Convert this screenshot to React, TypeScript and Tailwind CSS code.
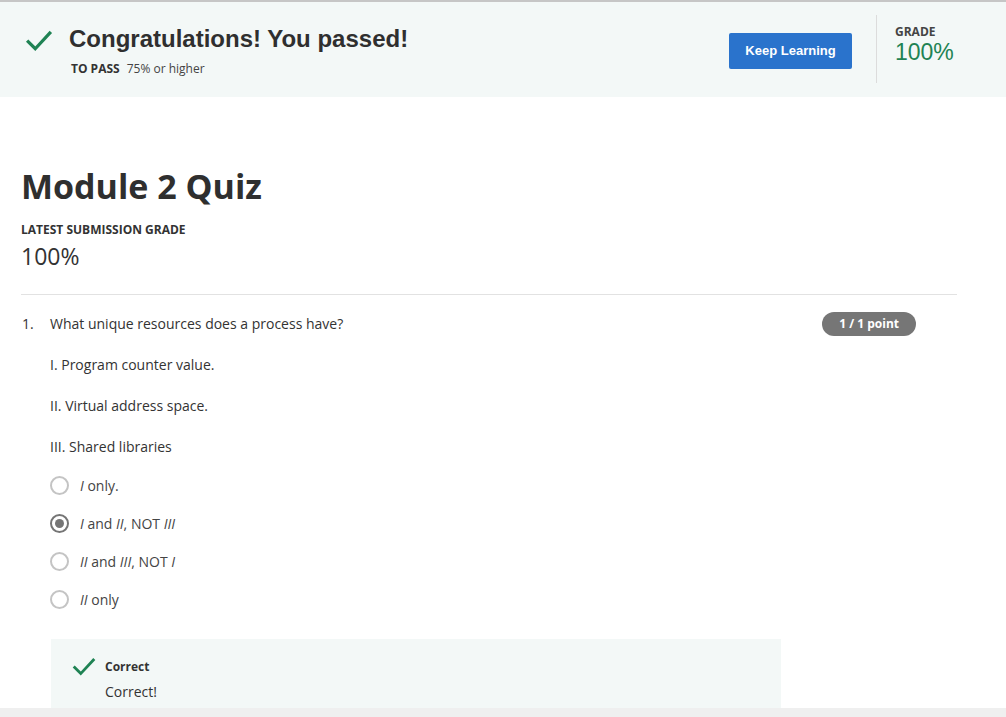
import React from "react";

const Check = ({ size = 28 }: { size?: number }) => (
  <svg width={size} height={size} viewBox="0 0 24 24" fill="none">
    <path d="M2.5 12.5L9 19L21.5 5.5" stroke="#1f8354" strokeWidth="2.6" />
  </svg>
);

const options = [
  { label: "only.", pre: "I", rest: "" },
  { pre: "I", label: "and", mid: "II", rest: "NOT", end: "III", checked: true },
  { pre: "II", label: "and", mid: "III", rest: "NOT", end: "I" },
  { pre: "II", label: "only", rest: "" },
];

const Radio = ({ checked }: { checked?: boolean }) => (
  <span
    className={
      "flex h-[19px] w-[19px] items-center justify-center rounded-full border-2 bg-white " +
      (checked ? "border-[#757575]" : "border-[#c4c4c4]")
    }
  >
    {checked && <span className="h-[9px] w-[9px] rounded-full bg-[#757575]" />}
  </span>
);

export default function App() {
  return (
    <div className="flex h-[717px] w-[1006px] flex-col overflow-hidden bg-white font-['Open_Sans',sans-serif] text-[#333]">
      <div className="h-[2px] shrink-0 bg-[#c6c6c6]" />
      <header className="flex h-[95px] shrink-0 items-start bg-[#f3f8f7] pl-[24px] pt-[23px]">
        <div className="flex items-start">
          <Check size={30} />
          <div className="ml-[15px]">
            <h1 className="font-['Liberation_Sans',Arial,sans-serif] text-[24px] font-bold leading-[28px] text-[#2f2f2f]">
              Congratulations! You passed!
            </h1>
            <p className="mt-[8px] ml-[2px] text-[12px] leading-[16px]">
              <span className="font-bold">TO PASS</span>
              <span className="ml-[7px] text-[#444]">75% or higher</span>
            </p>
          </div>
        </div>
        <button className="ml-auto mt-[8px] h-[36px] w-[123px] rounded-[2px] bg-[#2a73cc] font-['Liberation_Sans',Arial,sans-serif] text-[13px] font-bold text-white">
          Keep Learning
        </button>
        <div className="ml-[24px] -mt-[10px] h-[68px] w-px bg-[#dcdcdc]" />
        <div className="ml-[18px] w-[111px] -mt-[1px]">
          <div className="text-[12px] font-bold leading-[16px] text-[#444]">GRADE</div>
          <div className="-mt-[1px] font-['Liberation_Sans',Arial,sans-serif] text-[23px] leading-[26px] text-[#1f8354]">
            100%
          </div>
        </div>
      </header>

      <main className="min-h-0 flex-1 overflow-hidden pl-[21px] pr-[49px]">
        <h2 className="mt-[65px] text-[34px] font-bold leading-[48px] text-[#2f2f2f]">Module 2 Quiz</h2>
        <div className="mt-[12px] text-[12px] font-bold leading-[16px]">LATEST SUBMISSION GRADE</div>
        <div className="mt-[3px] text-[23px] leading-[30px]">100%</div>
        <div className="mt-[23px] h-px bg-[#e2e2e2]" />

        <div className="mt-[19px] flex">
          <span className="w-[29px] pl-px text-[14px] leading-[19px]">1.</span>
          <div className="flex-1 text-[14px] leading-[19px]">
            <div className="flex items-start justify-between pr-[41px]">
              <p>What unique resources does a process have?</p>
              <span className="-mt-[2px] rounded-full bg-[#767676] px-[17px] py-[4px] text-[12px] font-bold leading-[16px] text-white">
                1 / 1 point
              </span>
            </div>
            <p className="mt-[19px]">I. Program counter value.</p>
            <p className="mt-[22px]">II. Virtual address space.</p>
            <p className="mt-[22px]">III. Shared libraries</p>
            <div className="mt-[20px] flex flex-col gap-[19px]">
              {options.map((o, i) => (
                <label key={i} className="flex items-center">
                  <Radio checked={o.checked} />
                  <span className="ml-[11px] text-[14px] leading-[19px] text-[#444]">
                    <em>{o.pre}</em> {o.label}
                    {o.mid && (
                      <>
                        {" "}
                        <em>{o.mid}</em>, {o.rest} <em>{o.end}</em>
                      </>
                    )}
                  </span>
                </label>
              ))}
            </div>
            <div className="mt-[30px] ml-px h-[80px] w-[730px] bg-[#f3f8f7] pl-[20px] pt-[14px]">
              <div className="flex items-center">
                <Check size={26} />
                <span className="ml-[8px] text-[12px] font-bold">Correct</span>
              </div>
              <p className="ml-[34px] mt-[4px] text-[14px] leading-[18px]">Correct!</p>
            </div>
          </div>
        </div>
      </main>
      <div className="h-[9px] shrink-0 bg-[#efefef]" />
    </div>
  );
}
